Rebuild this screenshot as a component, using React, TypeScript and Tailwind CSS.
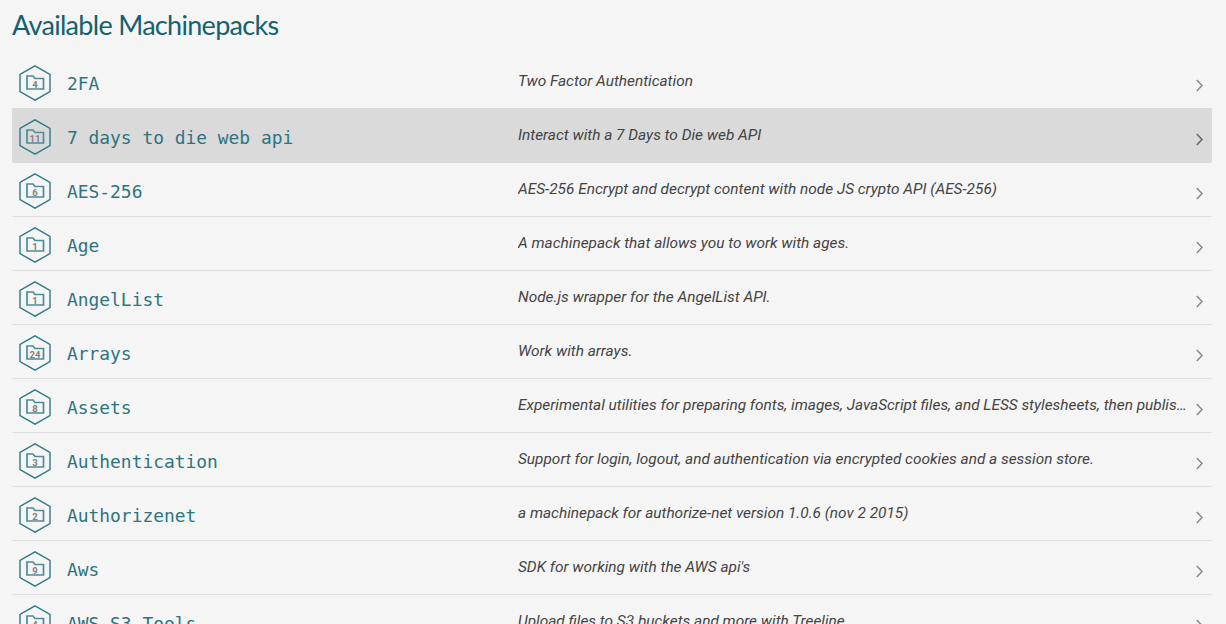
const packs = [
  { name: '2FA', count: 4, description: 'Two Factor Authentication' },
  { name: '7 days to die web api', count: 11, description: 'Interact with a 7 Days to Die web API', active: true },
  { name: 'AES-256', count: 6, description: 'AES-256 Encrypt and decrypt content with node JS crypto API (AES-256)' },
  { name: 'Age', count: 1, description: 'A machinepack that allows you to work with ages.' },
  { name: 'AngelList', count: 1, description: 'Node.js wrapper for the AngelList API.' },
  { name: 'Arrays', count: 24, description: 'Work with arrays.' },
  {
    name: 'Assets',
    count: 8,
    description: 'Experimental utilities for preparing fonts, images, JavaScript files, and LESS stylesheets, then publishing them to a CDN.',
  },
  { name: 'Authentication', count: 3, description: 'Support for login, logout, and authentication via encrypted cookies and a session store.' },
  { name: 'Authorizenet', count: 2, description: 'a machinepack for authorize-net version 1.0.6 (nov 2 2015)' },
  { name: 'Aws', count: 9, description: "SDK for working with the AWS api's" },
  { name: 'AWS S3 Tools', count: 4, description: 'Upload files to S3 buckets and more with Treeline' },
]

function PackIcon({ count }: { count: number }) {
  return (
    <div className="relative mt-[3px] h-[36px] w-[32px] shrink-0">
      <svg width="32" height="36" viewBox="0 0 32 36" fill="none">
        <path d="M16 .8 31 9.4v17.2L16 35.2 1 26.6V9.4z" stroke="#2f7b85" strokeWidth="1.4" />
        <path d="M8 11h6l2 2.5h8.5V24H8z" stroke="#4f8c96" strokeWidth="1.7" />
      </svg>
      <span className="absolute inset-x-0 top-[15px] text-center font-['Roboto',sans-serif] text-[9.5px] leading-[10px] font-bold text-[#84807c]">
        {count}
      </span>
    </div>
  )
}

export default function App() {
  return (
    <div className="h-[624px] overflow-hidden bg-[#f5f5f5] pt-[8px] pr-[14px] pl-3">
      <h1 className="h-[47px] font-['Lato',sans-serif] text-[27px] leading-[34px] tracking-[-0.7px] text-[#14626f]">
        Available Machinepacks
      </h1>
      <ul>
        {packs.map((pack) => (
          <li
            key={pack.name}
            className={
              pack.active
                ? 'relative -mt-px flex h-[55px] items-center rounded-[2px] bg-[#dadada] pr-[9px] pl-[7px]'
                : 'flex h-[54px] items-center rounded-[2px] border-b border-[#dedede] pr-[9px] pl-[7px]'
            }
          >
            <PackIcon count={pack.count} />
            <div className="w-[467px] pt-[6px] pl-[16px] font-['DejaVu_Sans_Mono',monospace] text-[17.9px] text-[#2d7480]">
              {pack.name}
            </div>
            <div className="min-w-0 flex-1 truncate pr-[8px] font-['Roboto',sans-serif] text-[15.4px] text-[#444] italic">
              {pack.description}
            </div>
            <svg className="mt-[8px] shrink-0" width="7" height="13" viewBox="0 0 7 13" fill="none">
              <path d="M.8 1l5.2 5.5L.8 12" stroke={pack.active ? '#666' : '#8a8a8a'} strokeWidth="1.5" />
            </svg>
          </li>
        ))}
      </ul>
    </div>
  )
}
